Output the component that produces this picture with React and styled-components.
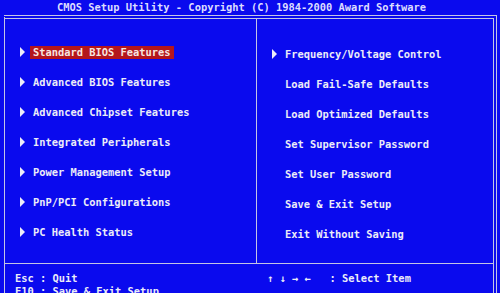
import React from "react";
import styled, { createGlobalStyle } from "styled-components";

const BLUE = "#0a0aee";
const TEXT = "#ececf8";
const LINE = "#c4c4e4";

const GlobalStyle = createGlobalStyle`
  html, body {
    margin: 0;
    padding: 0;
    background: ${BLUE};
    overflow: hidden;
  }
`;

const leftItems = [
  { label: "Standard BIOS Features", active: true },
  { label: "Advanced BIOS Features" },
  { label: "Advanced Chipset Features" },
  { label: "Integrated Peripherals" },
  { label: "Power Management Setup" },
  { label: "PnP/PCI Configurations" },
  { label: "PC Health Status" },
];

const rightItems = [
  { label: "Frequency/Voltage Control", arrow: true },
  { label: "Load Fail-Safe Defaults" },
  { label: "Load Optimized Defaults" },
  { label: "Set Supervisor Password" },
  { label: "Set User Password" },
  { label: "Save & Exit Setup" },
  { label: "Exit Without Saving" },
];

const App = () => {
  return (
    <Screen>
      <GlobalStyle />
      <TitleBar>CMOS Setup Utility - Copyright (C) 1984-2000 Award Software</TitleBar>
      <Frame>
        <MenuGrid>
          <MenuList $top={18} $divider>
            {leftItems.map((item) => (
              <MenuItem key={item.label}>
                <Arrow />
                <Label $active={item.active}>{item.label}</Label>
              </MenuItem>
            ))}
          </MenuList>
          <MenuList $top={20}>
            {rightItems.map((item) => (
              <MenuItem key={item.label}>
                <Arrow $hidden={!item.arrow} />
                <Label>{item.label}</Label>
              </MenuItem>
            ))}
          </MenuList>
        </MenuGrid>
        <Footer>
          <FooterCol>
            <FooterLine>Esc : Quit</FooterLine>
            <FooterLine>F10 : Save &amp; Exit Setup</FooterLine>
          </FooterCol>
          <FooterCol>
            <FooterLine>{"\u2191 \u2193 \u2192 \u2190   : Select Item"}</FooterLine>
          </FooterCol>
        </Footer>
      </Frame>
    </Screen>
  );
};

export default App;

const Screen = styled.div`
  width: 500px;
  height: 293px;
  overflow: hidden;
  background: ${BLUE};
  color: ${TEXT};
  font-family: "DejaVu Sans Mono", "Liberation Mono", monospace;
  font-weight: bold;
  font-size: 10.4px;
`;

const TitleBar = styled.div`
  height: 15px;
  line-height: 15px;
  padding-left: 57px;
  color: #dcdcff;
  white-space: pre;
`;

const Frame = styled.div`
  margin: 0 3px 0 4px;
  border-top: 4px double ${LINE};
  border-right: 4px double ${LINE};
  border-left: 1px solid ${LINE};
`;

const MenuGrid = styled.div`
  display: grid;
  grid-template-columns: 252px 1fr;
  height: 244px;
`;

const MenuList = styled.div`
  display: flex;
  flex-direction: column;
  padding-top: ${(p) => p.$top}px;
  border-right: ${(p) => (p.$divider ? `1px solid ${LINE}` : "none")};
`;

const MenuItem = styled.div`
  display: flex;
  align-items: center;
  height: 30px;
  padding-left: 15px;
  white-space: pre;
`;

const Arrow = styled.span`
  width: 0;
  height: 0;
  border-top: 5px solid transparent;
  border-bottom: 5px solid transparent;
  border-left: 5px solid ${(p) => (p.$hidden ? "transparent" : TEXT)};
  margin-right: 5px;
`;

const Label = styled.span`
  display: inline-block;
  height: 13px;
  line-height: 13px;
  padding: 0 3px;
  background: ${(p) => (p.$active ? "#b4161c" : "transparent")};
  color: ${(p) => (p.$active ? "#f6e6e0" : TEXT)};
`;

const Footer = styled.div`
  display: grid;
  grid-template-columns: 252px 1fr;
  border-top: 1px solid ${LINE};
  height: 40px;
`;

const FooterCol = styled.div`
  padding: 8px 0 0 10px;
`;

const FooterLine = styled.div`
  height: 13px;
  line-height: 13px;
  white-space: pre;
`;
